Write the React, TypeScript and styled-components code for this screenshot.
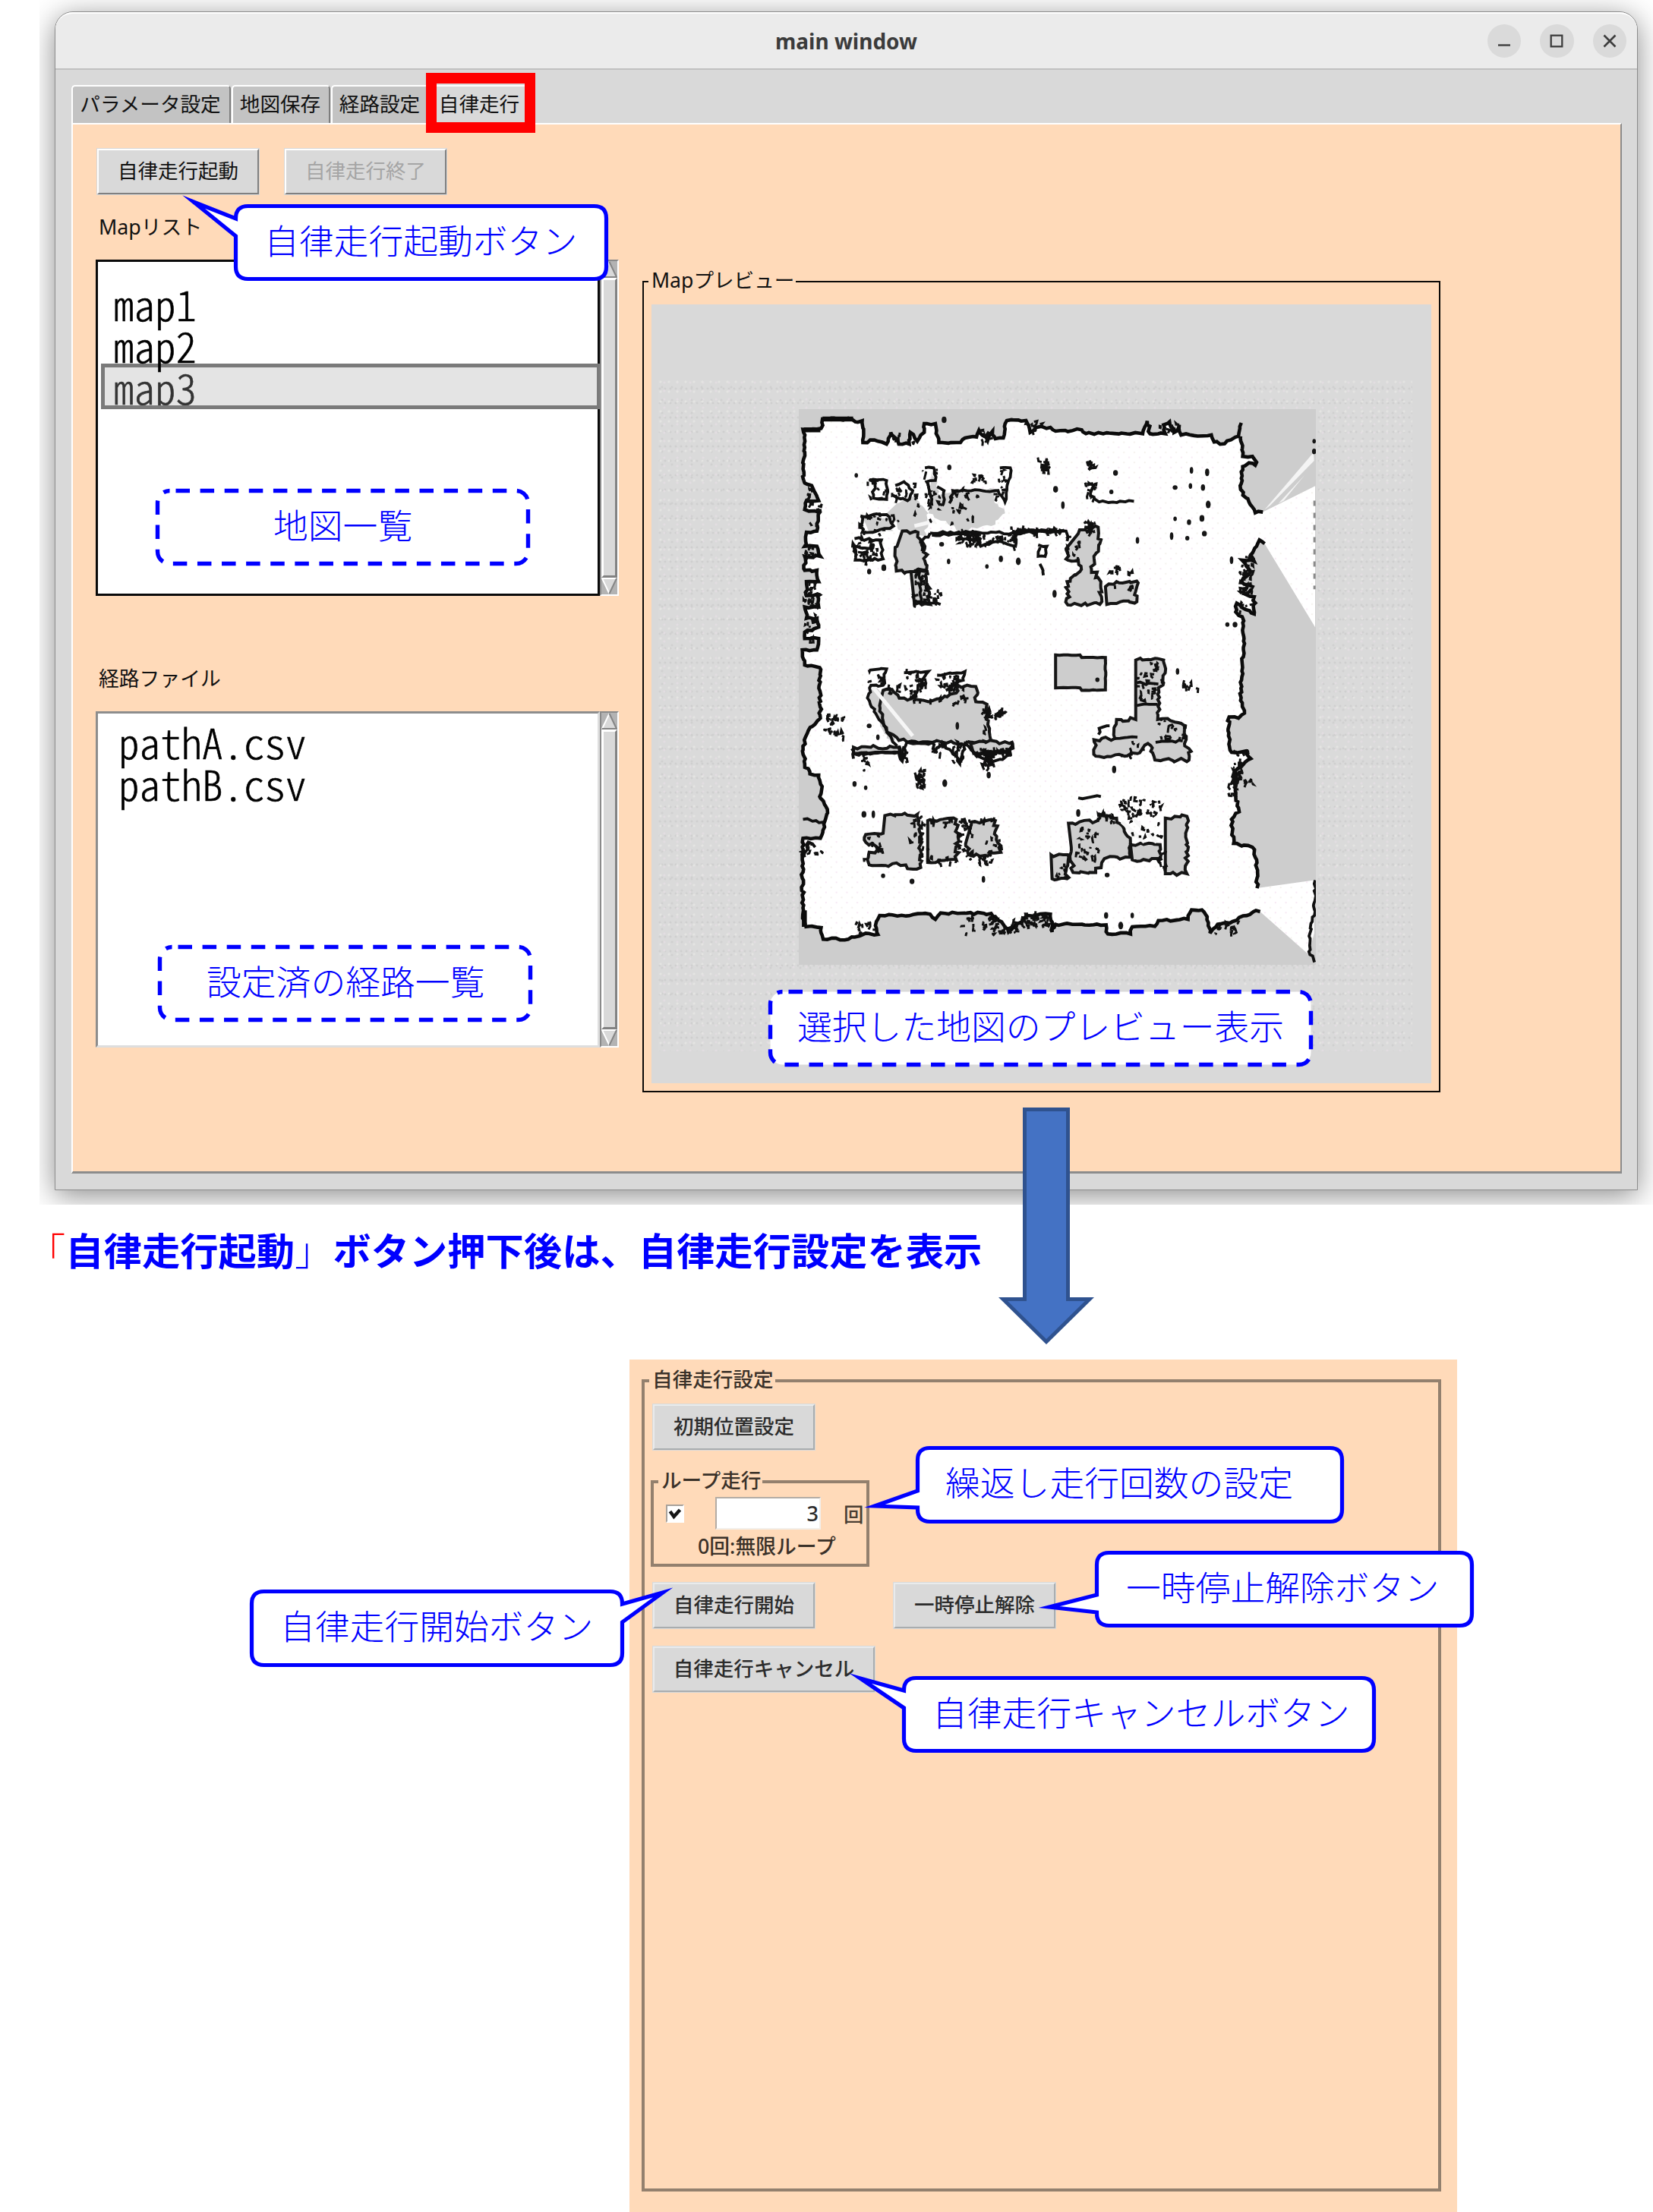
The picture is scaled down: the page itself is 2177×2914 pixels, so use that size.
import React from "react";
import styled, { createGlobalStyle, css } from "styled-components";

const BLUE = "#0000ff";
const PEACH = "#ffdab9";
const FACE = "#d9d9d9";
const JP = `"Noto Sans CJK JP", "Noto Sans", sans-serif`;
const UI = `"Noto Sans", "Noto Sans CJK JP", sans-serif`;

const GlobalStyle = createGlobalStyle`
  *, *::before, *::after { box-sizing: border-box; }
  html, body { margin: 0; padding: 0; background: #fff; }
  body { overflow: hidden; font-family: ${UI}; color: #111; }
`;

/* ---------- page ---------- */

const Page = styled.main`
  position: relative;
  display: flex;
  flex-direction: column;
  width: 2177px;
  height: 2914px;
  overflow: hidden;
  background: #fff;
`;

const Backdrop = styled.section`
  flex: none;
  width: 2125px;
  height: 1587px;
  margin-left: 52px;
  padding: 15px 20px 20px;
  overflow: hidden;
`;

/* ---------- main window ---------- */

const Window = styled.div`
  display: flex;
  flex-direction: column;
  width: 2085px;
  height: 1553px;
  border: 1px solid #8c8c8c;
  border-radius: 24px 24px 0 0;
  background: ${FACE};
  box-shadow: 0 7px 38px rgba(0, 0, 0, 0.46);
`;

const TitleBar = styled.header`
  display: grid;
  grid-template-columns: 1fr auto 1fr;
  align-items: center;
  flex: none;
  height: 76px;
  padding: 0 14px;
  border-top: 2px solid #fff;
  border-bottom: 2px solid #c0c0c0;
  border-radius: 23px 23px 0 0;
  background: #ebebeb;
`;

const Title = styled.h1`
  grid-column: 2;
  margin: 0;
  font: 700 28px/40px ${UI};
  color: #3b3b3b;
`;

const WindowControls = styled.div`
  display: flex;
  justify-content: flex-end;
  gap: 25px;
`;

const RoundButton = styled.button`
  display: grid;
  place-items: center;
  width: 44.5px;
  height: 44.5px;
  padding: 0 0 1px;
  border: 0;
  border-radius: 50%;
  background: #dadada;
`;

const WindowBody = styled.div`
  display: flex;
  flex-direction: column;
  flex: 1;
  padding: 20px 20px 21px 21px;
`;

const TabBar = styled.nav`
  display: flex;
  flex: none;
  height: 50px;
  gap: 1px;
`;

const Tab = styled.button<{ $w: number; $active?: boolean }>`
  width: ${(p) => p.$w}px;
  padding: 0 2px 4px 0;
  border: 2px solid #fff;
  border-right-color: #7d7d7d;
  border-bottom: 0;
  border-radius: 5px 5px 0 0;
  background: ${(p) => (p.$active ? FACE : "#c3c3c3")};
  font: 400 26.6px/40px ${JP};
  white-space: nowrap;
  color: #111;
`;

const TabPanel = styled.section`
  display: flex;
  flex-direction: column;
  flex: 1;
  padding: 31px;
  border: 2px solid #fff;
  border-right-color: #8c8c8c;
  border-bottom: 3px solid #8c8c8c;
  background: ${PEACH};
`;

const ButtonRow = styled.div<{ $gap: number }>`
  display: flex;
  gap: ${(p) => p.$gap}px;
`;

const PushButton = styled.button<{ $w?: number; $soft?: boolean }>`
  width: ${(p) => p.$w ?? 215}px;
  height: 62px;
  padding: 0 0 4px;
  border: 3px solid;
  border-color: ${(p) => (p.$soft ? "#e9ebec #a9adaf #a9adaf #e9ebec" : "#fff #808080 #808080 #fff")};
  outline: 1px solid ${FACE};
  outline-offset: -1px;
  background: ${FACE};
  font: ${(p) => (p.$soft ? 500 : 400)} 26.5px/40px ${JP};
  white-space: nowrap;
  color: ${(p) => (p.$soft ? "#2c2c2c" : "#111")};
  &:disabled { color: #a5a5a5; }
`;

const Columns = styled.div`
  display: flex;
  gap: 31px;
`;

const ListColumn = styled.div`
  display: flex;
  flex-direction: column;
  width: 688px;
`;

const FieldLabel = styled.label<{ $h: number; $top?: number }>`
  display: flex;
  align-items: center;
  height: ${(p) => p.$h}px;
  padding: ${(p) => p.$top ?? 0}px 0 2px 3px;
  font: 400 26.8px/36px ${UI};
`;

const ListRow = styled.div`
  display: flex;
  height: 443px;
`;

const ListBox = styled.ul<{ $focused?: boolean; $top: number; $left: number }>`
  width: 664px;
  margin: 0 0 0 -1px;
  padding: ${(p) => p.$top}px 0 0 0;
  list-style: none;
  background: #fff;
  border: 3px solid;
  ${(p) =>
    p.$focused
      ? css`border-color: #0a0a0a;`
      : css`border-color: #8d8d8d #dedede #dedede #8d8d8d;`}
  & > li { padding-left: ${(p) => p.$left}px; }
`;

const ListItem = styled.li<{ $selected?: boolean }>`
  height: 55px;
  font-family: "Noto Sans CJK JP", "Noto Sans Mono CJK JP", monospace;
  font-feature-settings: "hwid";
  font-weight: 300;
  font-size: 55px;
  line-height: 55px;
  white-space: pre;
  color: #000;
  -webkit-text-stroke: 0.6px currentColor;
  ${(p) =>
    p.$selected &&
    css`
      width: 658px;
      height: 60px;
      margin: -3px 0 0 4px;
      overflow: hidden;
      border: 5px solid #7a7a7a;
      background: #e4e4e4;
      line-height: 50px;
      color: #333;
      && { padding-left: 11px; }
    `}
`;

const Scroll = styled.div`
  display: flex;
  flex-direction: column;
  width: 25px;
  border: 2px solid;
  border-color: #8a8a8a #fff #fff #8a8a8a;
  background: #b3b3b3;
`;

const Thumb = styled.div`
  flex: 1;
  border: 3px solid;
  border-color: #fff #828282 #828282 #fff;
  background: ${FACE};
`;

const ArrowIcon = styled.svg`
  display: block;
  width: 21px;
  height: 22px;
`;

/* ---------- framed groups ---------- */

const Group = styled.fieldset<{ $w: number; $h: number; $soft?: boolean; $pad: string }>`
  width: ${(p) => p.$w}px;
  height: ${(p) => p.$h}px;
  min-width: 0;
  margin: 0;
  padding: ${(p) => p.$pad};
  border: ${(p) => (p.$soft ? "4px solid #93806e" : "2px solid #0c0a08")};
`;

const Legend = styled.legend<{ $soft?: boolean }>`
  height: 30px;
  margin-left: -4px;
  padding: 0 2px 0 4px;
  font: ${(p) => (p.$soft ? 500 : 400)} 26.6px/26px ${UI};
  color: ${(p) => (p.$soft ? "#3a3129" : "#111")};
`;

const PreviewSlot = styled.div`
  padding-top: 99px;
`;

const PreviewCanvas = styled.div`
  width: 1027px;
  height: 1026px;
  padding: 100px 25px 42px 9px;
  background: ${FACE};
`;

const Dither = styled.div`
  height: 884px;
  padding: 38px 0 0 185px;
  background-color: #dadada;
  background-image:
    radial-gradient(circle at 3px 2px, #e4e4e2 1px, transparent 2px),
    radial-gradient(circle at 5px 9px, #d0d0d0 1px, transparent 2px),
    radial-gradient(circle at 8px 3px, #e2dde1 1px, transparent 2.2px),
    radial-gradient(circle at 2px 11px, #cfcfcf 0.8px, transparent 2px);
  background-size: 11px 13px, 13px 17px, 17px 11px, 7px 19px;
`;

const MapSvg = styled.svg`
  display: block;
  width: 681px;
  height: 732px;
`;

/* ---------- caption ---------- */

const Caption = styled.p`
  flex: none;
  height: 204px;
  margin: 0;
  padding: 22px 0 0 36px;
  font: 700 50.3px/72px ${JP};
  white-space: nowrap;
  color: ${BLUE};
`;

const Bracket = styled.span<{ $red?: boolean }>`
  font-weight: 300;
  color: ${(p) => (p.$red ? "#ff0000" : BLUE)};
`;

/* ---------- settings panel ---------- */

const SettingsPanel = styled.section`
  flex: none;
  width: 1090px;
  height: 1123px;
  margin-left: 829px;
  padding: 13px 0 0 16px;
  background: ${PEACH};
`;

const SettingsStack = styled.div`
  display: flex;
  flex-direction: column;
  align-items: flex-start;
`;

const LoopSlot = styled.div`
  margin: 26px 0 20px -2px;
`;

const LoopRow = styled.div`
  display: flex;
  align-items: center;
  height: 43px;
`;

const Check = styled.span`
  display: grid;
  place-items: center;
  width: 24px;
  height: 24px;
  margin-left: 6px;
  border: 2px solid;
  border-color: #a8a29b #fff #fff #a8a29b;
  background: #fff;
`;

const CountInput = styled.div`
  width: 139px;
  height: 43px;
  margin-left: 41px;
  padding: 1px 1px 0 0;
  border: 2px solid;
  border-color: #b4aca4 #f3efea #f3efea #b4aca4;
  background: #fff;
  font: 500 27px/37px ${UI};
  text-align: right;
  color: #2c2c2c;
`;

const Unit = styled.span`
  margin-left: 30px;
  font: 500 26.4px/36px ${JP};
  color: #4a3e33;
`;

const Hint = styled.div`
  padding: 4px 0 0 48px;
  font: 500 26.8px/36px ${UI};
  white-space: nowrap;
  color: #3a3129;
`;

/* ---------- annotations laid over the screens ---------- */

const Highlight = styled.div`
  position: absolute;
  left: 561px;
  top: 96px;
  width: 144px;
  height: 79px;
  border: 14px solid #ff0000;
`;

const NoteBox = styled.div<{ $x: number; $y: number; $w: number; $h: number; $pad: number }>`
  position: absolute;
  left: ${(p) => p.$x}px;
  top: ${(p) => p.$y}px;
  width: ${(p) => p.$w}px;
  height: ${(p) => p.$h}px;
  padding: 0 0 10px ${(p) => p.$pad}px;
  display: flex;
  align-items: center;
`;

const NoteShape = styled.svg`
  position: absolute;
  left: 0;
  top: 0;
  width: 100%;
  height: 100%;
  overflow: visible;
`;

const NoteText = styled.span`
  position: relative;
  font: 300 45.8px/60px ${JP};
  white-space: nowrap;
  color: ${BLUE};
`;

const FlowArrow = styled.svg`
  position: absolute;
  left: 1315px;
  top: 1459px;
`;

type Pt = [number, number];

interface CalloutProps {
  x: number; y: number; w: number; h: number; textX: number;
  side: "left" | "right";
  tip: Pt; base: Pt;
  children: string;
}

/* Rounded speech bubble whose tail leaves the left or right edge; tip and base are page coordinates. */
function Callout({ x, y, w, h, textX, side, tip, base, children }: CalloutProps) {
  const i = 2.5, r = 16, R = w - i, B = h - i;
  const t = `${tip[0] - x} ${tip[1] - y}`;
  const b1 = base[0] - y, b2 = base[1] - y;
  const left = side === "left";
  const topR = left ? r : Math.min(r, b1 - i), topL = left ? Math.min(r, b1 - i) : r;
  const botL = left ? Math.min(r, B - b2) : r;
  const d = [
    `M${i + topL} ${i}H${R - topR}Q${R} ${i} ${R} ${i + topR}`,
    left ? "" : `V${b1}L${t}L${R} ${b2}`,
    `V${B - r}Q${R} ${B} ${R - r} ${B}H${i + r}Q${i} ${B} ${i} ${B - botL}`,
    left ? `V${b2}L${t}L${i} ${b1}` : "",
    `V${i + topL}Q${i} ${i} ${i + topL} ${i}Z`,
  ].join("");
  return (
    <NoteBox $x={x} $y={y} $w={w} $h={h} $pad={textX - x}>
      <NoteShape><path d={d} fill="#fff" stroke={BLUE} strokeWidth={5.2} strokeMiterlimit={12} /></NoteShape>
      <NoteText>{children}</NoteText>
    </NoteBox>
  );
}

function DashedNote({ x, y, w, h, textX, children }: { x: number; y: number; w: number; h: number; textX: number; children: string }) {
  return (
    <NoteBox $x={x} $y={y} $w={w} $h={h} $pad={textX - x}>
      <NoteShape>
        <rect x={2.5} y={2.5} width={w - 5} height={h - 5} rx={16} fill="#fff" stroke={BLUE} strokeWidth={5.4}
          strokeDasharray="18.5 13.6" strokeDashoffset={-8} />
      </NoteShape>
      <NoteText>{children}</NoteText>
    </NoteBox>
  );
}

function ScrollBar() {
  return (
    <Scroll>
      <ArrowIcon viewBox="0 0 21 22">
        <path d="M10.5 1L20 21H1Z" fill={FACE} />
        <path d="M10.5 1L1 21" stroke="#fff" strokeWidth="2" />
        <path d="M10.5 1L20 21H1" stroke="#858585" strokeWidth="2" fill="none" />
      </ArrowIcon>
      <Thumb />
      <ArrowIcon viewBox="0 0 21 22">
        <path d="M1 1H20L10.5 21Z" fill={FACE} />
        <path d="M20 1H1L10.5 21" stroke="#fff" strokeWidth="2" fill="none" />
        <path d="M20 1L10.5 21" stroke="#858585" strokeWidth="2" />
      </ArrowIcon>
    </Scroll>
  );
}

/* ---------- occupancy map ---------- */

function makeRandom(seed: number) {
  let s = seed;
  const next = () => {
    s = (s * 1664525 + 1013904223) % 4294967296;
    return s / 4294967296;
  };
  next();
  next();
  return next;
}

const parse = (s: string): Pt[] => s.trim().split(/\s+/).map((p) => p.split(",").map(Number) as Pt);

/* Breaks each segment into short, slightly displaced steps, as laser-scanned walls look. */
function rough(s: string, amp: number, seed: number): string {
  const pts = parse(s), rnd = makeRandom(seed * 7919);
  let d = `M${pts[0]}`;
  for (let i = 1; i < pts.length; i++) {
    const [ax, ay] = pts[i - 1], [bx, by] = pts[i];
    const n = Math.max(1, Math.round(Math.hypot(bx - ax, by - ay) / 12));
    for (let k = 1; k <= n; k++) {
      const j = k === n ? 0 : amp;
      d += `L${(ax + ((bx - ax) * k) / n + (rnd() - 0.5) * j).toFixed(1)} ${(ay + ((by - ay) * k) / n + (rnd() - 0.5) * j * 1.3).toFixed(1)}`;
    }
  }
  return d;
}

/* Short scraps, the size of a few occupancy cells each. */
function speckle([x, y, w, h, n]: number[], seed: number): string {
  const rnd = makeRandom(seed * 104729);
  let d = "";
  for (let i = 0; i < n; i++) {
    const px = x + rnd() * w, py = y + rnd() * h;
    const dx = (rnd() - 0.5) * 20, dy = (rnd() - 0.5) * 32;
    d += `M${px.toFixed(0)} ${py.toFixed(0)}l${dx.toFixed(0)} ${(rnd() * 8 - 4).toFixed(0)}l${(rnd() * 6 - 3).toFixed(0)} ${dy.toFixed(0)}`;
    if (rnd() > 0.5) d += `l${(-dx * 0.6).toFixed(0)} ${(rnd() * 14).toFixed(0)}`;
  }
  return d;
}

const TOP_WALL =
  "62,340 64,170 60,138 112,134 116,97 200,97 210,108 230,104 232,190 265,180 300,196 312,150 335,196 365,196 368,150 388,185 408,150 408,115 440,115 450,190 512,190 525,172 558,168 565,142 590,182 604,145 612,175 635,172 645,103 700,103 712,150 730,130 770,130 785,145 860,140 872,155 1035,155 1048,105 1056,155 1100,155 1095,120 1112,108 1125,150 1140,120 1145,160 1232,160 1240,188 1270,195 1310,165 1318,112";
const RIGHT_UPPER = "1316,165 1322,245 1350,245 1362,268 1358,280 1340,270 1322,285 1316,375 1340,425 1358,468 1380,465";
const RIGHT_LOWER =
  "1385,590 1370,575 1362,600 1345,635 1355,660 1320,655 1345,700 1318,740 1350,760 1330,790 1355,800 1355,868 1330,850 1305,825 1302,860 1325,895 1324,1000 1316,1210 1327,1260 1310,1280 1283,1275 1280,1330 1290,1415 1330,1410 1345,1440 1300,1490 1302,1590 1312,1650 1290,1680 1296,1775 1350,1790 1362,1840 1363,1952";
const BOTTOM_WALL =
  "1372,2045 1360,2040 1285,2090 1250,2095 1228,2130 1220,2065 1205,2038 1175,2038 1165,2075 1080,2080 1070,2103 1005,2105 1000,2133 935,2133 930,2097 785,2095 775,2125 770,2055 705,2060 680,2090 650,2125 630,2085 600,2052 455,2050 440,2075 425,2055 280,2060 268,2100 275,2135 240,2130 200,2145 190,2154 118,2154 112,2108 64,2105";
const LEFT_WALL =
  "64,2105 60,2030 58,1840 60,1755 110,1755 122,1710 130,1640 108,1590 115,1550 105,1505 80,1500 65,1460 60,1390 75,1330 110,1280 108,1080 65,1070 58,1010 100,1010 105,965 65,965 65,940 105,920 100,885 70,885 65,840 105,840 100,790 70,795 70,740 105,740 100,695 65,695 65,640 110,640 100,600 65,600 70,545 100,540 105,465 65,455 70,420 105,420 85,360 65,350 62,340";

const FREE_SPACE =
  `${TOP_WALL} ${RIGHT_UPPER} 1530,362 1530,920 ${RIGHT_LOWER} 1527,1920 1527,2130 1512,2215 ${BOTTOM_WALL} ${LEFT_WALL}`;

/* Furniture: scanned outlines with unknown space inside. */
const BLOCKS = [
  "785,1030 855,1030 860,1040 928,1040 928,1168 860,1170 855,1160 785,1160",
  "850,550 872,525 900,520 912,590 895,640 888,690 915,740 912,830 870,825 820,832 818,740 855,700 850,655 820,655 815,610",
  "928,760 960,740 1018,738 1012,825 970,820 932,830",
  "345,540 390,545 410,600 415,690 370,700 328,698 330,600",
  "370,700 415,700 425,830 380,830",
  "290,1170 300,1165 350,1200 420,1215 500,1180 505,1150 556,1155 556,1215 588,1225 592,1290 605,1370 560,1380 460,1375 360,1375 310,1340 288,1280 280,1230",
  "540,1375 660,1375 655,1420 550,1420",
  "205,1395 335,1395 340,1415 205,1420",
  "1015,1050 1095,1050 1095,1140 1080,1160 1078,1285 1115,1290 1155,1310 1155,1380 1168,1400 1168,1445 1070,1445 1050,1380 1020,1420 900,1430 895,1365 955,1360 960,1285 1015,1285",
  "295,1665 388,1660 395,1730 398,1870 360,1875 355,1860 250,1860 250,1810 290,1800 240,1770 240,1740 290,1735",
  "418,1685 500,1680 505,1750 500,1840 418,1850",
  "545,1690 612,1685 615,1760 628,1810 590,1825 535,1820 530,1760",
  "822,1695 905,1685 912,1660 960,1675 1000,1770 1000,1830 925,1835 900,1890 835,1890 830,1790",
  "1000,1780 1085,1780 1085,1835 1005,1840",
  "1100,1675 1162,1668 1160,1780 1162,1895 1100,1895",
  "772,1820 820,1820 818,1915 775,1915",
];

/* Patches scanned faintly, with no hard outline. */
const FAINT = [
  "490,385 615,375 612,430 640,470 600,520 560,530 500,535 470,500 420,470 440,400",
  "330,430 380,400 420,470 410,560 350,560 320,500 300,470",
  "430,300 445,370 465,440 440,460 425,380",
  "230,480 310,490 320,540 250,545",
  "260,1160 290,1180 300,1300 340,1400 300,1360 270,1260 248,1200",
];

const STROKES = [
  "425,548 540,545 660,548 815,540 818,580", "430,556 540,553", "660,540 810,536", "425,548 400,580 402,620",
  "505,575 560,575 570,600 620,580 670,600 672,555",
  "410,290 435,290 440,340 415,345 430,440", "625,290 655,290 650,340 640,425 620,380 530,380 490,380 480,430",
  "445,365 465,380 460,440", "250,335 265,350 262,410 300,415 300,340 250,340", "325,360 350,345 375,380 360,420 320,400",
  "225,480 300,475 320,520 260,545 230,545 228,480", "208,570 285,575 290,650 210,655 205,600 260,610",
  "875,355 895,360 885,400 910,425 1010,422",
  "205,1420 335,1415 345,1450 358,1375 430,1375 440,1410 460,1375 500,1430 510,1460 525,1380 560,1430 600,1460 655,1425 660,1375",
  "250,1090 300,1085 290,1150 255,1150 245,1200 300,1330 330,1390", "350,1100 420,1095 390,1150 385,1200",
  "445,1110 525,1095 520,1130 470,1170", "735,595 760,600 755,640 735,640 740,600", "740,670 750,715",
  "1018,1140 1080,1145", "1018,1230 1078,1225", "1072,1375 1150,1370", "955,1360 1020,1355",
  "908,1345 910,1320 940,1310", "1530,1920 1528,2060 1515,2130 1515,2215 1528,2245", "850,1595 915,1590",
  "60,1680 120,1690", "95,1790 75,1770 65,1830", "200,1400 205,1440", "395,700 400,820 455,830",
];

const CLUSTERS: number[][] = [
  [245, 330, 55, 85, 9], [320, 350, 60, 60, 10], [400, 290, 60, 150, 15], [225, 475, 110, 80, 18], [205, 575, 80, 85, 28],
  [375, 440, 180, 90, 16], [480, 370, 160, 40, 9], [505, 550, 60, 50, 40], [565, 550, 105, 50, 20], [655, 530, 150, 18, 30], [375, 690, 45, 140, 26],
  [545, 300, 35, 45, 9], [620, 290, 30, 130, 11], [430, 770, 25, 60, 10], [865, 505, 35, 40, 24], [875, 350, 25, 60, 12], [915, 685, 100, 50, 9],
  [820, 560, 40, 90, 8], [745, 265, 18, 38, 20], [882, 262, 10, 36, 10], [1318, 640, 35, 150, 34], [1310, 830, 40, 30, 5],
  [450, 1095, 70, 80, 24], [355, 1100, 60, 110, 22], [250, 1090, 50, 60, 8], [300, 1140, 50, 50, 6], [125, 1260, 55, 90, 24], [490, 1370, 25, 95, 14],
  [420, 1200, 120, 25, 8], [550, 1405, 100, 25, 44], [580, 1230, 20, 150, 12], [230, 1430, 20, 60, 9], [390, 1490, 16, 66, 28],
  [1290, 1410, 60, 130, 26], [1290, 1480, 20, 110, 28], [580, 1430, 25, 40, 14], [340, 1400, 15, 45, 12], [435, 1385, 20, 30, 8],
  [1020, 1060, 70, 90, 13], [1020, 1140, 60, 80, 12], [1080, 1280, 80, 90, 15], [960, 1370, 90, 60, 6], [965, 1600, 120, 60, 38],
  [1000, 1655, 90, 110, 15], [835, 1700, 75, 140, 24], [910, 1660, 50, 35, 10], [375, 1665, 30, 110, 12], [500, 1700, 50, 130, 15],
  [400, 1690, 15, 150, 9], [418, 1680, 195, 16, 18], [590, 1740, 40, 90, 8], [240, 1735, 50, 125, 9], [410, 1830, 90, 25, 9],
  [540, 1830, 60, 30, 10], [520, 2060, 110, 75, 30], [680, 2050, 90, 50, 34], [630, 2080, 110, 50, 16], [215, 2080, 50, 50, 9],
  [1225, 2090, 80, 45, 14], [65, 1750, 45, 70, 9], [615, 1250, 20, 22, 18], [1140, 1145, 50, 18, 9], [70, 360, 35, 170, 14],
  [70, 740, 35, 100, 20], [70, 880, 35, 120, 12], [70, 600, 35, 50, 9], [785, 1830, 30, 80, 7], [1075, 1790, 30, 100, 9],
  [565, 140, 40, 45, 7], [320, 160, 60, 35, 5], [1085, 105, 55, 50, 8], [700, 105, 80, 45, 8], [925, 745, 85, 80, 4],
];

const DOTS: Pt[] = [
  [213, 320], [480, 288], [785, 375], [806, 438], [945, 385], [957, 310], [1175, 300], [1220, 308], [1128, 368], [1172, 362],
  [1208, 368], [1223, 435], [1128, 492], [1168, 505], [1205, 490], [1118, 560], [1163, 568], [1212, 550], [1020, 577], [782, 788],
  [458, 592], [478, 660], [628, 650], [678, 660], [588, 680], [250, 700], [292, 685], [1290, 655], [1278, 910], [1300, 910],
  [1135, 1095], [953, 1483], [250, 1310], [275, 1355], [593, 1505], [467, 1537], [240, 1555], [208, 1540], [235, 1660], [262, 1660],
  [290, 1903], [373, 1925], [578, 1917], [850, 1655], [933, 1900], [1005, 2060], [930, 2060], [972, 2100], [1527, 185], [1527, 225],
  [465, 100], [503, 1310], [905, 1128],
];

function FloorMap() {
  const ns = "non-scaling-stroke" as const;
  return (
    <MapSvg viewBox="48 58 1484 2197" preserveAspectRatio="none">
      <defs>
        <pattern id="grain" width="30" height="40" patternUnits="userSpaceOnUse">
          <rect x="4" y="6" width="4" height="6" fill="#f7e6f3" />
          <rect x="19" y="26" width="4" height="6" fill="#f3f0ea" />
        </pattern>
      </defs>
      <rect x="48" y="58" width="1484" height="2197" fill="#cdcdcd" />
      <polygon points={FREE_SPACE} fill="#fff" />
      <polygon points={FREE_SPACE} fill="url(#grain)" />
      <path d="M1385 455L1525 230L1527 262L1400 440ZM1425 430L1500 318L1440 420Z" fill="#f4f4f4" />
      <g fill="none" stroke="#0b0b0b" strokeWidth="4.6" strokeLinejoin="miter">
        {[TOP_WALL, RIGHT_UPPER, RIGHT_LOWER, BOTTOM_WALL, LEFT_WALL].map((w, i) => (
          <path key={i} d={rough(w, 7, 11 + i)} vectorEffect={ns} />
        ))}
        <path d="M116 97H204M62 140H110M64 2105V2040" strokeWidth="6.5" vectorEffect={ns} />
      </g>
      <g fill="#cfcfcf">
        {FAINT.map((f, i) => <path key={i} d={rough(f, 12, 30 + i) + "Z"} />)}
      </g>
      <g fill="#cdcdcd" stroke="#151515" strokeWidth="4" strokeLinejoin="miter">
        {BLOCKS.map((b, i) => (
          <path key={i} d={rough(b, i ? 12 : 2, 40 + i) + "Z"} vectorEffect={ns} />
        ))}
      </g>
      <g stroke="#f6f6f6" strokeWidth="5" fill="none">
        <path d="M262 1160L375 1350M975 1690L1040 1770M1010 1680L1075 1770M440 500L380 520" vectorEffect={ns} />
      </g>
      <g fill="none" stroke="#101010" strokeWidth="3.8">
        {STROKES.map((s, i) => (
          <path key={i} d={rough(s, 8, 90 + i)} vectorEffect={ns} />
        ))}
        {CLUSTERS.map((c, i) => (
          <path key={i} d={speckle(c, 200 + i * 7)} strokeWidth="3" vectorEffect={ns} />
        ))}
      </g>
      <g fill="#161616">
        {DOTS.map(([x, y], i) => (
          <ellipse key={i} cx={x} cy={y} rx={5 + (i % 3)} ry={9 + (i % 4) * 2} />
        ))}
      </g>
      <path d="M1528 420V770" stroke="#8a8a8a" strokeWidth="3" strokeDasharray="7 9" vectorEffect={ns} />
    </MapSvg>
  );
}

/* ---------- screen ---------- */

export default function App() {
  return (
    <Page>
      <GlobalStyle />
      <Backdrop>
        <Window>
          <TitleBar>
            <Title>main window</Title>
            <WindowControls>
              <RoundButton aria-label="minimize">
                <svg width="18" height="18"><path d="M1 14.5H17" stroke="#3d3d3d" strokeWidth="2.4" /></svg>
              </RoundButton>
              <RoundButton aria-label="maximize">
                <svg width="18" height="18"><rect x="1.7" y="1.7" width="14.6" height="14.6" fill="none" stroke="#3d3d3d" strokeWidth="2.3" /></svg>
              </RoundButton>
              <RoundButton aria-label="close">
                <svg width="18" height="18"><path d="M1.5 1.5L16.5 16.5M16.5 1.5L1.5 16.5" stroke="#3d3d3d" strokeWidth="2.6" /></svg>
              </RoundButton>
            </WindowControls>
          </TitleBar>
          <WindowBody>
            <TabBar>
              <Tab $w={210}>パラメータ設定</Tab>
              <Tab $w={130}>地図保存</Tab>
              <Tab $w={130}>経路設定</Tab>
              <Tab $w={130} $active>自律走行</Tab>
            </TabBar>
            <TabPanel>
              <ButtonRow $gap={32}>
                <PushButton>自律走行起動</PushButton>
                <PushButton disabled>自律走行終了</PushButton>
              </ButtonRow>
              <Columns>
                <ListColumn>
                  <FieldLabel $h={85}>Mapリスト</FieldLabel>
                  <ListRow>
                    <ListBox $focused $top={27} $left={20}>
                      <ListItem>map1</ListItem>
                      <ListItem>map2</ListItem>
                      <ListItem $selected>map3</ListItem>
                    </ListBox>
                    <ScrollBar />
                  </ListRow>
                  <FieldLabel $h={152} $top={68}>経路ファイル</FieldLabel>
                  <ListRow>
                    <ListBox $top={9} $left={27}>
                      <ListItem>pathA.csv</ListItem>
                      <ListItem>pathB.csv</ListItem>
                    </ListBox>
                    <ScrollBar />
                  </ListRow>
                </ListColumn>
                <PreviewSlot>
                  <Group $w={1051} $h={1083} $pad="15px 10px 10px">
                    <Legend>Mapプレビュー</Legend>
                    <PreviewCanvas>
                      <Dither><FloorMap /></Dither>
                    </PreviewCanvas>
                  </Group>
                </PreviewSlot>
              </Columns>
            </TabPanel>
          </WindowBody>
        </Window>
      </Backdrop>

      <Caption>
        <Bracket $red>「</Bracket>自律走行起動<Bracket>」</Bracket>ボタン押下後は、自律走行設定を表示
      </Caption>

      <SettingsPanel>
        <Group $w={1053} $h={1083} $soft $pad="15px 10px 10px 10px">
          <Legend $soft>自律走行設定</Legend>
          <SettingsStack>
            <PushButton $soft>初期位置設定</PushButton>
            <LoopSlot>
              <Group $w={288} $h={127} $soft $pad="5px 0 0 10px">
                <Legend $soft>ループ走行</Legend>
                <LoopRow>
                  <Check>
                    <svg width="18" height="18"><path d="M2.5 6L7.5 13L15.5 4" fill="none" stroke="#151515" strokeWidth="4.4" /></svg>
                  </Check>
                  <CountInput>3</CountInput>
                  <Unit>回</Unit>
                </LoopRow>
                <Hint>0回:無限ループ</Hint>
              </Group>
            </LoopSlot>
            <ButtonRow $gap={102}>
              <PushButton $soft>自律走行開始</PushButton>
              <PushButton $soft>一時停止解除</PushButton>
            </ButtonRow>
            <ButtonRow $gap={0} style={{ marginTop: 22 }}>
              <PushButton $soft $w={294}>自律走行キャンセル</PushButton>
            </ButtonRow>
          </SettingsStack>
        </Group>
      </SettingsPanel>

      <Highlight />
      <FlowArrow width="126" height="313">
        <path d="M34.5 2.5H91.5V252.5H120L63 308.5L6 252.5H34.5Z" fill="#4472c4" stroke="#2f528f" strokeWidth="5" />
      </FlowArrow>

      <DashedNote x={205} y={644} w={493} h={101} textX={360}>地図一覧</DashedNote>
      <DashedNote x={208} y={1245} w={493} h={101} textX={272}>設定済の経路一覧</DashedNote>
      <DashedNote x={1012} y={1304} w={717} h={101} textX={1050}>選択した地図のプレビュー表示</DashedNote>

      <Callout x={308} y={269} w={493} h={101} textX={348} side="left" tip={[255, 266]} base={[288, 311]}>自律走行起動ボタン</Callout>
      <Callout x={1206} y={1905} w={564} h={102} textX={1245} side="left" tip={[1152, 1984]} base={[1964, 1986]}>繰返し走行回数の設定</Callout>
      <Callout x={1442} y={2043} w={499} h={101} textX={1483} side="left" tip={[1382, 2117]} base={[2101, 2124]}>一時停止解除ボタン</Callout>
      <Callout x={1188} y={2208} w={624} h={101} textX={1228} side="left" tip={[1133, 2211]} base={[2227, 2250]}>自律走行キャンセルボタン</Callout>
      <Callout x={329} y={2094} w={493} h={102} textX={369} side="right" tip={[873, 2098]} base={[2113, 2137]}>自律走行開始ボタン</Callout>
    </Page>
  );
}
